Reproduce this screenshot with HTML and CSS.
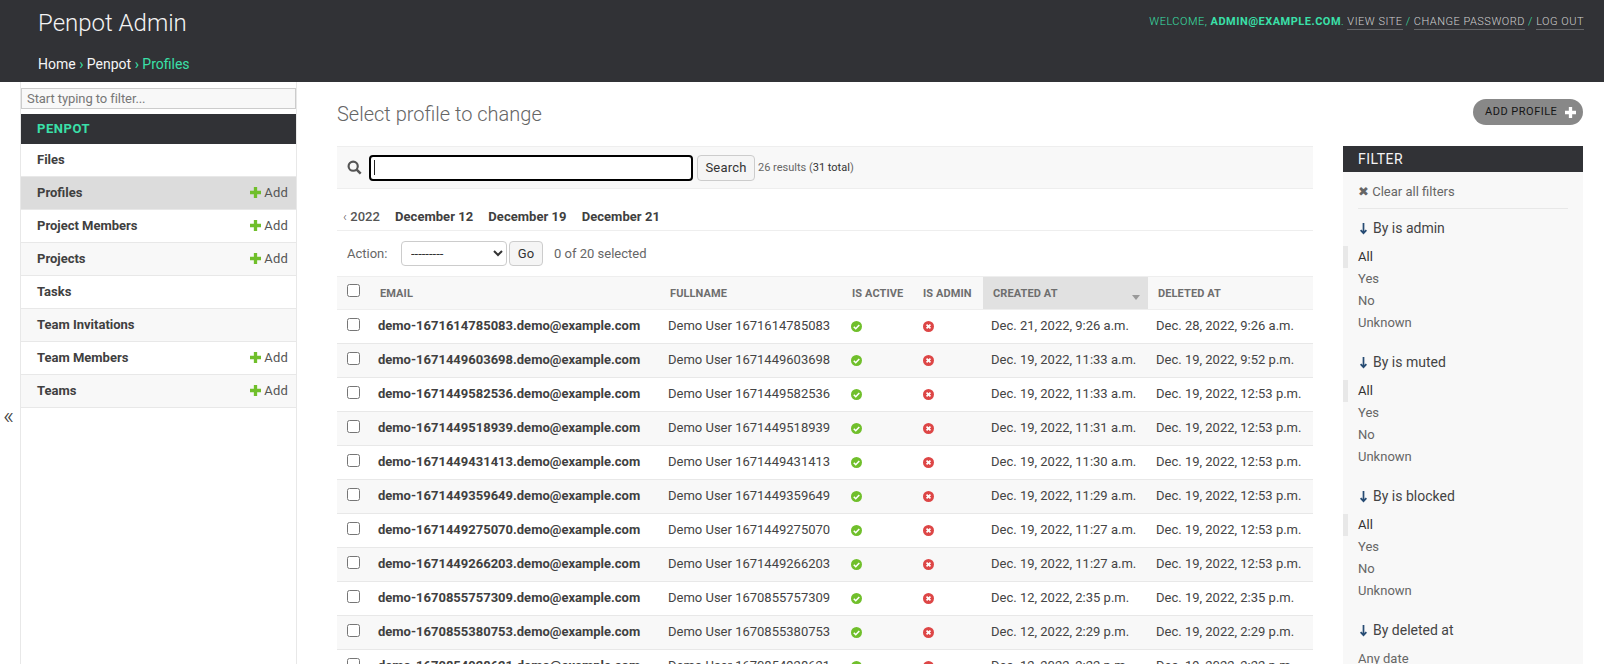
FILE: index.html
```html
<!DOCTYPE html>
<html lang="en">
<head>
<meta charset="utf-8">
<title>Select profile to change</title>
<link rel="stylesheet" href="styles.css">
</head>
<body>
<svg class="defs" width="0" height="0">
  <defs>
    <symbol id="plus" viewBox="0 0 12 12"><path d="M4.2 0h3.6v4.2H12v3.6H7.8V12H4.2V7.8H0V4.2h4.2z"/></symbol>
    <symbol id="yes" viewBox="0 0 13 13"><circle cx="6.5" cy="6.5" r="6.5" fill="#70bf2b"/><path d="M3.3 6.8l2.3 2.3 4.2-4.4" fill="none" stroke="#fff" stroke-width="1.9"/></symbol>
    <symbol id="no" viewBox="0 0 13 13"><circle cx="6.5" cy="6.5" r="6.5" fill="#dd4646"/><path d="M4.2 4.2l4.6 4.6M8.8 4.2l-4.6 4.6" fill="none" stroke="#fff" stroke-width="2"/></symbol>
    <symbol id="arrow" viewBox="0 0 10 14"><path d="M5 1v11M1.8 8.8L5 12.2l3.2-3.4" fill="none" stroke="#264b73" stroke-width="1.9"/></symbol>
  </defs>
</svg>
<header class="topbar">
  <div class="topbar-row">
    <div class="brand">Penpot Admin</div>
    <div class="tools">WELCOME, <strong>ADMIN@EXAMPLE.COM</strong>. <a>VIEW SITE</a> / <a>CHANGE PASSWORD</a> / <a>LOG OUT</a></div>
  </div>
  <div class="crumbs"><a>Home</a> › <a>Penpot</a> › Profiles</div>
</header>
<div class="shell">
  <div class="toggle"><span>«</span></div>
  <nav class="side">
    <input class="nav-filter" placeholder="Start typing to filter..." aria-label="Filter">
    <div class="app-cap">PENPOT</div>
    <div class="nav-row"><b>Files</b></div>
    <div class="nav-row current"><b>Profiles</b><span class="add"><svg class="plus"><use href="#plus"/></svg>Add</span></div>
    <div class="nav-row"><b>Project Members</b><span class="add"><svg class="plus"><use href="#plus"/></svg>Add</span></div>
    <div class="nav-row alt"><b>Projects</b><span class="add"><svg class="plus"><use href="#plus"/></svg>Add</span></div>
    <div class="nav-row"><b>Tasks</b></div>
    <div class="nav-row alt"><b>Team Invitations</b></div>
    <div class="nav-row"><b>Team Members</b><span class="add"><svg class="plus"><use href="#plus"/></svg>Add</span></div>
    <div class="nav-row alt"><b>Teams</b><span class="add"><svg class="plus"><use href="#plus"/></svg>Add</span></div>
  </nav>
  <main class="content">
    <div class="title-row">
      <h1>Select profile to change</h1>
      <a class="add-btn"><span class="add-label">ADD PROFILE</span><svg class="btn-plus"><use href="#plus"/></svg></a>
    </div>
    <div class="columns">
      <section class="changelist">
        <form class="toolbar">
          <svg class="search-ic" viewBox="0 0 16 16"><circle cx="6.6" cy="6.6" r="4.9" fill="none" stroke="#555" stroke-width="2.3"/><path d="M10.3 10.3l4.3 4.3" stroke="#555" stroke-width="2.7"/></svg>
          <div class="search-box"><i class="caret"></i></div>
          <span class="btn search-btn">Search</span>
          <span class="count">26 results (<a>31 total</a>)</span>
        </form>
        <div class="dates"><span class="back"><i>‹</i> 2022</span><span>December 12</span><span>December 19</span><span>December 21</span></div>
        <div class="actions">
          <label>Action:</label>
          <select class="action-select" aria-label="Action"><option>---------</option></select>
          <span class="btn go">Go</span>
          <span class="sel">0 of 20 selected</span>
        </div>
        <table>
          <thead>
            <tr><th class="c0"><input type="checkbox" aria-label="all"></th><th class="c1">EMAIL</th><th class="c2">FULLNAME</th><th class="c3">IS ACTIVE</th><th class="c4">IS ADMIN</th><th class="c5 sorted">CREATED AT<i class="sort"></i></th><th class="c6">DELETED AT</th></tr>
          </thead>
          <tbody>
            <tr><td><input type="checkbox" aria-label="row"></td><th>demo-1671614785083.demo@example.com</th><td>Demo User 1671614785083</td><td><svg class="st"><use href="#yes"/></svg></td><td><svg class="st"><use href="#no"/></svg></td><td>Dec. 21, 2022, 9:26 a.m.</td><td>Dec. 28, 2022, 9:26 a.m.</td></tr>
            <tr><td><input type="checkbox" aria-label="row"></td><th>demo-1671449603698.demo@example.com</th><td>Demo User 1671449603698</td><td><svg class="st"><use href="#yes"/></svg></td><td><svg class="st"><use href="#no"/></svg></td><td>Dec. 19, 2022, 11:33 a.m.</td><td>Dec. 19, 2022, 9:52 p.m.</td></tr>
            <tr><td><input type="checkbox" aria-label="row"></td><th>demo-1671449582536.demo@example.com</th><td>Demo User 1671449582536</td><td><svg class="st"><use href="#yes"/></svg></td><td><svg class="st"><use href="#no"/></svg></td><td>Dec. 19, 2022, 11:33 a.m.</td><td>Dec. 19, 2022, 12:53 p.m.</td></tr>
            <tr><td><input type="checkbox" aria-label="row"></td><th>demo-1671449518939.demo@example.com</th><td>Demo User 1671449518939</td><td><svg class="st"><use href="#yes"/></svg></td><td><svg class="st"><use href="#no"/></svg></td><td>Dec. 19, 2022, 11:31 a.m.</td><td>Dec. 19, 2022, 12:53 p.m.</td></tr>
            <tr><td><input type="checkbox" aria-label="row"></td><th>demo-1671449431413.demo@example.com</th><td>Demo User 1671449431413</td><td><svg class="st"><use href="#yes"/></svg></td><td><svg class="st"><use href="#no"/></svg></td><td>Dec. 19, 2022, 11:30 a.m.</td><td>Dec. 19, 2022, 12:53 p.m.</td></tr>
            <tr><td><input type="checkbox" aria-label="row"></td><th>demo-1671449359649.demo@example.com</th><td>Demo User 1671449359649</td><td><svg class="st"><use href="#yes"/></svg></td><td><svg class="st"><use href="#no"/></svg></td><td>Dec. 19, 2022, 11:29 a.m.</td><td>Dec. 19, 2022, 12:53 p.m.</td></tr>
            <tr><td><input type="checkbox" aria-label="row"></td><th>demo-1671449275070.demo@example.com</th><td>Demo User 1671449275070</td><td><svg class="st"><use href="#yes"/></svg></td><td><svg class="st"><use href="#no"/></svg></td><td>Dec. 19, 2022, 11:27 a.m.</td><td>Dec. 19, 2022, 12:53 p.m.</td></tr>
            <tr><td><input type="checkbox" aria-label="row"></td><th>demo-1671449266203.demo@example.com</th><td>Demo User 1671449266203</td><td><svg class="st"><use href="#yes"/></svg></td><td><svg class="st"><use href="#no"/></svg></td><td>Dec. 19, 2022, 11:27 a.m.</td><td>Dec. 19, 2022, 12:53 p.m.</td></tr>
            <tr><td><input type="checkbox" aria-label="row"></td><th>demo-1670855757309.demo@example.com</th><td>Demo User 1670855757309</td><td><svg class="st"><use href="#yes"/></svg></td><td><svg class="st"><use href="#no"/></svg></td><td>Dec. 12, 2022, 2:35 p.m.</td><td>Dec. 19, 2022, 2:35 p.m.</td></tr>
            <tr><td><input type="checkbox" aria-label="row"></td><th>demo-1670855380753.demo@example.com</th><td>Demo User 1670855380753</td><td><svg class="st"><use href="#yes"/></svg></td><td><svg class="st"><use href="#no"/></svg></td><td>Dec. 12, 2022, 2:29 p.m.</td><td>Dec. 19, 2022, 2:29 p.m.</td></tr>
            <tr><td><input type="checkbox" aria-label="row"></td><th>demo-1670854928621.demo@example.com</th><td>Demo User 1670854928621</td><td><svg class="st"><use href="#yes"/></svg></td><td><svg class="st"><use href="#no"/></svg></td><td>Dec. 12, 2022, 2:22 p.m.</td><td>Dec. 19, 2022, 2:22 p.m.</td></tr>
          </tbody>
        </table>
      </section>
      <aside class="filter">
        <h2>FILTER</h2>
        <div class="clear"><span class="x">✖</span> Clear all filters</div>
        <h3><svg class="arr"><use href="#arrow"/></svg>By is admin</h3>
        <ul><li class="on">All</li><li>Yes</li><li>No</li><li>Unknown</li></ul>
        <h3><svg class="arr"><use href="#arrow"/></svg>By is muted</h3>
        <ul><li class="on">All</li><li>Yes</li><li>No</li><li>Unknown</li></ul>
        <h3><svg class="arr"><use href="#arrow"/></svg>By is blocked</h3>
        <ul><li class="on">All</li><li>Yes</li><li>No</li><li>Unknown</li></ul>
        <h3><svg class="arr"><use href="#arrow"/></svg>By deleted at</h3>
        <ul><li>Any date</li></ul>
      </aside>
    </div>
  </main>
</div>
</body>
</html>
```
FILE: styles.css
```css
* { box-sizing: border-box; }
html, body { margin: 0; height: 664px; overflow: hidden; background: #fff; }
body { font-family: Roboto, "Noto Sans", sans-serif; font-size: 14px; color: #333; }
.defs { position: absolute; }
a { text-decoration: none; }

.topbar { height: 82px; background: #313236; color: #3ae0a9; padding: 0 20px 0 38px; display: flex; flex-direction: column; }
.topbar-row { display: flex; justify-content: space-between; height: 47px; }
.brand { font-size: 24px; font-weight: 300; color: #f4f4f4; padding-top: 8px; line-height: 30px; }
.tools { font-size: 11px; font-weight: 300; letter-spacing: .5px; padding-top: 15px; line-height: 13px; color: #3ae0a9; }
.tools strong { font-weight: 700; }
.tools a { color: #d0d0d0; border-bottom: 1px solid rgba(255,255,255,.25); padding-bottom: 1px; }
.crumbs { font-size: 14px; line-height: 16px; padding-top: 9px; }
.crumbs a { color: #f5f5f5; }

.shell { display: flex; height: 582px; }
.toggle { width: 20px; flex: none; font-size: 24px; font-weight: 300; line-height: 24px; color: #444; padding: 322px 0 0 3px; }
.side { width: 277px; flex: none; border-left: 1px solid #e8e8e8; border-right: 1px solid #e8e8e8; height: 582px; display: flex; flex-direction: column; }
.nav-filter { width: 275px; height: 21px; margin: 6px 0 5px; padding: 2px 5px; font: 13px Roboto, sans-serif; letter-spacing: -.08px; background: #f8f8f8; border: 1px solid #ccc; outline: 0; color: #333; flex: none; }
.nav-filter::placeholder { color: #777; opacity: 1; }
.app-cap { height: 30px; background: #313236; color: #3ae0a9; font-size: 13px; font-weight: 700; letter-spacing: .55px; line-height: 30px; padding-left: 16px; flex: none; }
.nav-row { height: 33px; border-bottom: 1px solid #e8e8e8; display: flex; justify-content: space-between; align-items: center; padding: 0 8px 1px 16px; flex: none; }
.nav-row b { font-size: 13px; font-weight: 700; color: #404040; }
.nav-row.alt { background: #f8f8f8; }
.nav-row.current { background: #dcdcdc; }
.add { font-size: 13px; color: #555; letter-spacing: .2px; display: flex; align-items: center; }
.plus { width: 11px; height: 11px; fill: #70bf2b; margin-right: 3px; }

.content { flex: 1; min-width: 0; padding: 0 21px 0 40px; }
.title-row { display: flex; justify-content: space-between; height: 64px; }
h1 { margin: 0; font-size: 20px; font-weight: 300; color: #666; padding-top: 19px; line-height: 26px; }
.add-btn { margin-top: 17px; height: 26px; width: 110px; background: #888; border-radius: 13px; color: #151515; font-size: 11px; letter-spacing: .5px; padding-left: 12px; padding-right: 7px; display: flex; align-items: center; justify-content: space-between; }
.add-label { padding-bottom: 2px; }
.btn-plus { width: 11px; height: 11px; fill: #fff; }

.columns { display: flex; justify-content: space-between; align-items: flex-start; }
.changelist { width: 976px; flex: none; }
.toolbar { height: 43px; background: #f8f8f8; border-top: 1px solid #eee; border-bottom: 1px solid #eee; display: flex; align-items: center; padding-left: 10px; }
.search-ic { width: 15px; height: 15px; margin-right: 7px; flex: none; }
.search-box { width: 324px; height: 26px; border: 2px solid #000; border-radius: 4px; background: #fff; display: flex; align-items: center; padding-left: 3px; flex: none; }
.caret { display: block; width: 1px; height: 15px; background: #222; }
.btn { display: inline-flex; align-items: center; justify-content: center; background: #f5f5f5; border: 1px solid #ccc; border-radius: 4px; color: #333; font-size: 13px; }
.search-btn { width: 58px; height: 26px; margin-left: 4px; letter-spacing: .2px; }
.count { font-size: 11px; color: #666; margin-left: 3px; padding-bottom: 1px; }
.count a { color: #333; }

.dates { height: 42px; border-bottom: 1px solid #eee; display: flex; gap: 15px; padding: 19px 0 0 6px; font-size: 13px; font-weight: 700; color: #404040; line-height: 17px; letter-spacing: .05px; }
.back { font-weight: 500; color: #555; }
.back i { font-style: normal; font-weight: 300; }
.actions { height: 45px; display: flex; align-items: center; padding-left: 10px; font-size: 13px; color: #666; padding-bottom: 1px; }
.actions label { width: 54px; }
.action-select { width: 106px; height: 25px; background: #fff; border: 1px solid #ccc; border-radius: 4px; font: 13px Roboto, sans-serif; color: #333; padding: 0 5px; }
.go { width: 34px; height: 25px; margin-left: 2px; }
.sel { margin-left: 11px; color: #666; }

table { border-collapse: collapse; width: 976px; table-layout: fixed; font-size: 13px; }
thead th { height: 33px; background: #f8f8f8; border-top: 1px solid #eee; border-bottom: 1px solid #eee; font-size: 11px; font-weight: 700; color: #6e6e6e; text-align: left; padding: 1px 10px 0; white-space: nowrap; position: relative; letter-spacing: .1px; }
thead th.c0 { padding: 0 0 5px 10px; }
thead th.sorted { background: #e1e1e1; }
.sort { position: absolute; right: 8px; top: 18px; width: 0; height: 0; border-left: 4.5px solid transparent; border-right: 4.5px solid transparent; border-top: 5px solid #999; }
.c0 { width: 33px; }
.c1 { width: 290px; }
.c2 { width: 182px; }
.c3 { width: 71px; }
.c4 { width: 70px; }
.c5 { width: 165px; }
.c6 { width: 165px; }
tbody tr { height: 34px; }
tbody tr:nth-child(even) { background: #f8f8f8; }
tbody td, tbody th { border-bottom: 1px solid #e8e8e8; padding: 0 8px 2px; white-space: nowrap; vertical-align: middle; text-align: left; color: #444; }
tbody th { font-weight: 700; color: #404040; }
tbody td:first-child { padding: 0 0 6px 10px; }
tbody td:nth-child(4) { padding-left: 9px; }
tbody td:nth-child(5) { padding-left: 10px; }
input[type=checkbox] { width: 13px; height: 13px; margin: 0; accent-color: #444; vertical-align: middle; }
.st { width: 11px; height: 11px; display: block; margin-top: 1px; }

.filter { width: 240px; flex: none; background: #f8f8f8; height: 518px; }
.filter h2 { margin: 0; height: 26px; background: #313236; color: #f5f5f5; font-size: 14px; font-weight: 400; letter-spacing: .5px; line-height: 26px; padding-left: 15px; }
.clear { margin: 0 15px; height: 37px; border-bottom: 1px solid #e8e8e8; font-size: 13px; color: #666; padding-top: 12px; line-height: 16px; }
.clear .x { font-size: 13px; }
.filter h3 { margin: 0; font-size: 14px; font-weight: 400; color: #444; padding-left: 16px; line-height: 18px; padding-top: 10px; display: flex; align-items: center; height: 28px; }
.arr { width: 9px; height: 13px; margin-right: 5px; }
.filter ul { list-style: none; margin: 0; padding: 9px 0 0; height: 106px; }
.filter li { height: 22px; line-height: 22px; padding-left: 15px; font-size: 13px; color: #666; }
.filter li.on { color: #333; border-left: 5px solid #e8e8e8; padding-left: 10px; }
```
